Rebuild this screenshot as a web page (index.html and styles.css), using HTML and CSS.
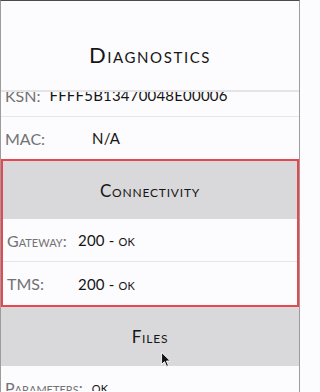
FILE: index.html
```html
<!DOCTYPE html>
<html>
<head>
<meta charset="utf-8">
<link rel="stylesheet" href="styles.css">
</head>
<body>
<div class="frame">
  <header class="top">
    <h1 class="title">Diagnostics</h1>
  </header>
  <div class="viewport">
    <div class="list">
      <div class="row">
        <span class="label">KSN:</span>
        <span class="value">FFFF5B13470048E00006</span>
      </div>
      <div class="row">
        <span class="label label-mac">MAC:</span>
        <span class="value">N/A</span>
      </div>
      <section class="group group-selected">
        <h2 class="group-title">Connectivity</h2>
        <div class="row">
          <span class="label label-conn">Gateway:</span>
          <span class="value">200 - ok</span>
        </div>
        <div class="row row-last">
          <span class="label label-conn">TMS:</span>
          <span class="value">200 - ok</span>
        </div>
      </section>
      <section class="group">
        <h2 class="group-title">Files</h2>
        <div class="row">
          <span class="label">Parameters:</span>
          <span class="value">ok</span>
        </div>
      </section>
    </div>
  </div>
  <svg class="cursor" width="10" height="15" viewBox="0 0 11 17">
    <path d="M0.5 0.5 L0.5 14 L3.8 10.9 L6.2 16.3 L8.3 15.4 L6 10.2 L10.4 10.2 Z" fill="#111" stroke="#fff" stroke-width="1"/>
  </svg>
</div>
</body>
</html>
```
FILE: styles.css
```css
* { box-sizing: border-box; }
html, body { margin: 0; padding: 0; background: #fcfbfe; }
body {
  width: 300px;
  height: 392px;
  overflow: hidden;
  font-family: Lato, "Open Sans", sans-serif;
  font-variant: small-caps;
}
.frame {
  position: relative;
  width: 300px;
  height: 392px;
  border-top: 1px solid #4a4a4a;
  border-left: 1px solid #9c9c9c;
  border-right: 1px solid #9c9c9c;
  overflow: hidden;
}
.top {
  height: 91px;
  display: flex;
  align-items: center;
  justify-content: center;
  padding-top: 18px;
  border-bottom: 2px solid #e4e3e6;
}
.title {
  margin: 0;
  font-size: 22px;
  font-weight: 400;
  letter-spacing: 1.6px;
  color: #161616;
}
.viewport {
  height: 299px;
  overflow: hidden;
}
.list {
  margin-top: -18px;
}
.row {
  height: 43px;
  display: flex;
  align-items: center;
  gap: 9px;
  padding-left: 4px;
  border-bottom: 1.5px solid #e6e5e8;
}
.row-last { border-bottom: none; }
.label {
  font-size: 16px;
  font-weight: 400;
  color: #727272;
}
.label-mac { width: 78px; }
.label-conn { width: 62px; }
.value {
  font-size: 15px;
  font-weight: 400;
  letter-spacing: 0.2px;
  color: #141414;
}
.group-title {
  margin: 0;
  height: 59px;
  display: flex;
  align-items: center;
  justify-content: center;
  background: #d9d8da;
  font-size: 17px;
  font-weight: 400;
  letter-spacing: 0.8px;
  color: #161616;
}
.group-selected {
  border: 2px solid #e8474e;
  margin-top: -1px;
}
.group-selected .group-title { height: 58px; }
.cursor {
  position: absolute;
  left: 160px;
  top: 351px;
}
```
